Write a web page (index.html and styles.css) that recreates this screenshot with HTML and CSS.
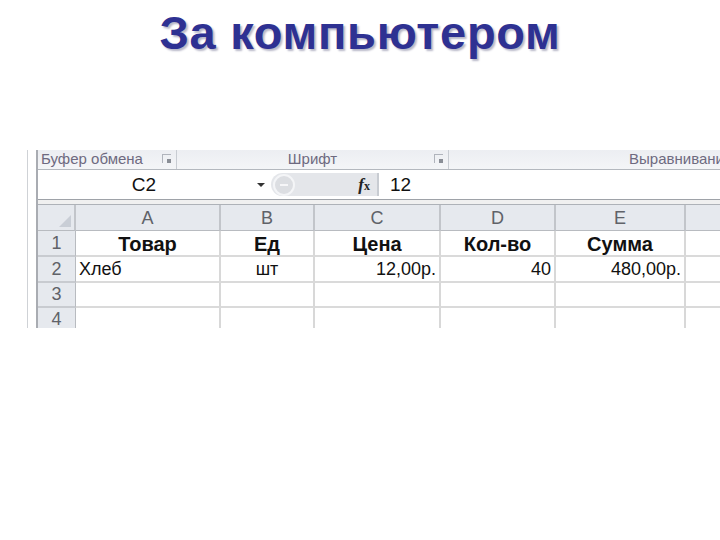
FILE: index.html
```html
<!DOCTYPE html>
<html>
<head>
<meta charset="utf-8">
<link rel="stylesheet" href="styles.css">
</head>
<body>
<h1 class="title">За компьютером</h1>
<div class="sheet">
  <div class="excel">
    <div class="ribbon">
      <div class="group g1"><span class="glabel">Буфер обмена</span><span class="launch"></span></div>
      <div class="group g2"><span class="glabel">Шрифт</span><span class="launch"></span></div>
      <div class="group g3"><span class="glabel">Выравнивани</span></div>
    </div>
    <div class="fbar">
      <div class="namebox"><span class="ref">C2</span><span class="arrow"></span></div>
      <div class="fxzone">
        <span class="knob"></span>
        <span class="fx"><i>f</i><small>x</small></span>
      </div>
      <div class="formula">12</div>
    </div>
    <div class="sep"></div>
    <div class="grid">
      <div class="h corner"><svg width="12" height="12" viewBox="0 0 12 12"><polygon points="12,0 12,12 0,12" fill="#c9ced6"/></svg></div>
      <div class="h">A</div><div class="h">B</div><div class="h">C</div><div class="h">D</div><div class="h">E</div><div class="h last"></div>

      <div class="rh">1</div>
      <div class="c b ctr">Товар</div><div class="c b ctr">Ед</div><div class="c b ctr">Цена</div><div class="c b ctr">Кол-во</div><div class="c b ctr">Сумма</div><div class="c last"></div>

      <div class="rh">2</div>
      <div class="c">Хлеб</div><div class="c ctr">шт</div><div class="c rt">12,00р.</div><div class="c rt">40</div><div class="c rt">480,00р.</div><div class="c last"></div>

      <div class="rh">3</div>
      <div class="c"></div><div class="c"></div><div class="c"></div><div class="c"></div><div class="c"></div><div class="c last"></div>

      <div class="rh">4</div>
      <div class="c"></div><div class="c"></div><div class="c"></div><div class="c"></div><div class="c"></div><div class="c last"></div>
    </div>
  </div>
</div>
</body>
</html>
```
FILE: styles.css
```css
html, body {
  margin: 0;
  padding: 0;
  background: #ffffff;
}
body {
  width: 720px;
  height: 540px;
  overflow: hidden;
  font-family: "Liberation Sans", Arial, sans-serif;
}
.title {
  margin: 0;
  padding-top: 7px;
  height: 144px;
  box-sizing: border-box;
  text-align: center;
  font-family: "Liberation Sans", Arial, sans-serif;
  font-weight: bold;
  font-size: 47px;
  line-height: 52px;
  color: #2e3192;
  text-shadow: 2px 2px 2px #b8b8c8;
  letter-spacing: 0.7px;
}
.sheet {
  margin-left: 27px;
  margin-top: 6px;
  height: 178px;
  border-left: 1px solid #cfd2d6;
  padding-left: 8px;
  overflow: hidden;
}
.excel {
  height: 178px;
  border-left: 2px solid #a9acb2;
  overflow: hidden;
}
.ribbon {
  display: flex;
  height: 20px;
  background: linear-gradient(#eceef2, #f4f5f7);
  border-bottom: 1px solid #b4b8be;
  box-sizing: border-box;
  overflow: hidden;
}
.group {
  display: flex;
  align-items: flex-start;
  border-right: 1px solid #c8ccd2;
  box-sizing: border-box;
  position: relative;
}
.g1 { width: 139px; padding-left: 3px; }
.g2 { width: 272px; justify-content: center; }
.g3 { flex: 1; justify-content: flex-end; border-right: none; }
.glabel {
  font-size: 15px;
  line-height: 17px;
  margin-top: 0;
  color: #6e6a80;
  white-space: nowrap;
}
.g3 .glabel { margin-right: -4px; }
.launch {
  position: absolute;
  right: 5px;
  top: 4px;
  width: 8px;
  height: 8px;
  border-top: 1px solid #b0b4bc;
  border-left: 1px solid #b0b4bc;
}
.launch::after {
  content: "";
  position: absolute;
  right: 0;
  bottom: 0;
  width: 4px;
  height: 4px;
  background: #8a8e96;
}
.fbar {
  display: flex;
  height: 29px;
  background: #ffffff;
  border-bottom: 1px solid #9ea2a8;
  box-sizing: content-box;
}
.namebox {
  width: 233px;
  display: flex;
  align-items: center;
  position: relative;
}
.ref {
  width: 212px;
  text-align: center;
  font-size: 19px;
  color: #111;
}
.arrow {
  width: 0;
  height: 0;
  border-left: 4px solid transparent;
  border-right: 4px solid transparent;
  border-top: 4px solid #333;
  margin-left: 7px;
}
.fxzone {
  width: 106px;
  margin: 3px 0;
  background: #e4e6ea;
  border-radius: 12px 0 0 12px;
  display: flex;
  align-items: center;
  justify-content: space-between;
  border-right: 2px solid #c8ccd2;
}
.knob {
  width: 18px;
  height: 18px;
  border-radius: 50%;
  border: 2px solid #f4f5f7;
  background: #dcdee2;
  margin-left: 2px;
  position: relative;
}
.knob::after {
  content: "";
  position: absolute;
  left: 5px;
  top: 8px;
  width: 8px;
  height: 2px;
  background: #f6f6f8;
}
.fx {
  font-family: "Liberation Serif", "Times New Roman", serif;
  font-weight: bold;
  font-size: 17px;
  color: #222;
  margin-right: 7px;
}
.fx small {
  font-size: 12px;
  font-style: normal;
}
.formula {
  padding-left: 11px;
  display: flex;
  align-items: center;
  font-size: 19px;
  color: #111;
}
.sep {
  height: 4px;
  background: #f0f0f0;
  border-bottom: 1px solid #aeb2b8;
}
.grid {
  display: grid;
  grid-template-columns: 38px 145px 94px 126px 115px 130px 1fr;
  grid-template-rows: 26px 26px 26px 25px 25px;
}
.h, .rh {
  background: #e6e9ee;
  color: #606268;
  font-size: 18px;
  display: flex;
  align-items: center;
  justify-content: center;
  border-right: 1px solid #c6c9ce;
  border-bottom: 1px solid #c6c9ce;
  box-sizing: border-box;
}
.h { border-right: 2px solid #c2c5ca; border-bottom: 1px solid #b8bbc0; padding-top: 1px; }
.corner { justify-content: flex-end; align-items: flex-end; padding: 0 3px 3px 0; }
.rh { border-right: 1px solid #b8bbc0; border-bottom: 2px solid #c8cbd0; }
.c {
  font-size: 18px;
  color: #111;
  display: flex;
  align-items: center;
  padding: 0 3px;
  border-right: 2px solid #d8d8d8;
  border-bottom: 2px solid #dadada;
  box-sizing: border-box;
  white-space: nowrap;
}
.b { font-weight: bold; font-size: 20px; padding-top: 2px; }
.ctr { justify-content: center; }
.rt { justify-content: flex-end; }
.last { border-right: none; }
```
